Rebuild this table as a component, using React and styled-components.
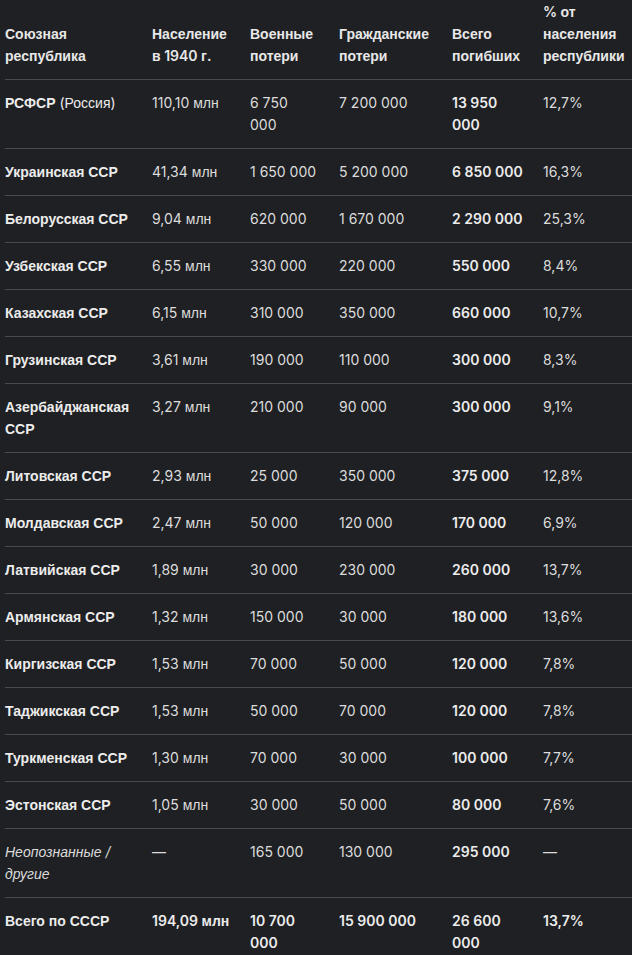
import React from "react";
import styled, { createGlobalStyle } from "styled-components";

const GlobalStyle = createGlobalStyle`
  html, body {
    margin: 0;
    padding: 0;
    background: #1f2023;
  }
  body {
    font-family: Inter, "Noto Sans", sans-serif;
    color: #e3e3e3;
    -webkit-font-smoothing: antialiased;
  }
`;

const Page = styled.div`
  padding: 0 0 0 5px;
  overflow: hidden;
`;

const Table = styled.table`
  border-collapse: collapse;
  table-layout: fixed;
  width: 627px;
  font-size: 14px;
  line-height: 22px;
`;

const Th = styled.th`
  text-align: left;
  vertical-align: bottom;
  font-weight: 600;
  white-space: pre;
  padding: 1px 0 12px 0;
  border-bottom: 1px solid #47494d;
  color: #e8e8e8;
`;

const Td = styled.td`
  vertical-align: top;
  white-space: pre;
  padding: 12px 0;
  border-bottom: 1px solid #47494d;
  font-weight: ${({ $bold }) => ($bold ? 600 : 400)};
  font-style: ${({ $italic }) => ($italic ? "italic" : "normal")};
  color: ${({ $bold }) => ($bold ? "#ececec" : "#dcdcdc")};
`;

// Cyrillic falls back to an Arial-like face in the original
const Cyr = styled.span`
  font-family: "Liberation Sans", Arial, sans-serif;
`;

const Plain = styled.span`
  font-weight: 400;
`;

function Txt({ children }) {
  const parts = children.split(/([\u0400-\u04FF]+(?:[ /]+[\u0400-\u04FF]+)*)/);
  return parts.map((p, i) =>
    /[\u0400-\u04FF]/.test(p) ? <Cyr key={i}>{p}</Cyr> : p
  );
}

const widths = [147, 98, 89, 113, 91, 89];

const headers = [
  "Союзная\nреспублика",
  "Население\nв 1940 г.",
  "Военные\nпотери",
  "Гражданские\nпотери",
  "Всего\nпогибших",
  "% от\nнаселения\nреспублики",
];

const rows = [
  { name: "РСФСР", note: " (Россия)", pop: "110,10 млн", mil: "6 750\n000", civ: "7 200 000", total: "13 950\n000", pct: "12,7%" },
  { name: "Украинская ССР", pop: "41,34 млн", mil: "1 650 000", civ: "5 200 000", total: "6 850 000", pct: "16,3%" },
  { name: "Белорусская ССР", pop: "9,04 млн", mil: "620 000", civ: "1 670 000", total: "2 290 000", pct: "25,3%" },
  { name: "Узбекская ССР", pop: "6,55 млн", mil: "330 000", civ: "220 000", total: "550 000", pct: "8,4%" },
  { name: "Казахская ССР", pop: "6,15 млн", mil: "310 000", civ: "350 000", total: "660 000", pct: "10,7%" },
  { name: "Грузинская ССР", pop: "3,61 млн", mil: "190 000", civ: "110 000", total: "300 000", pct: "8,3%" },
  { name: "Азербайджанская\nССР", pop: "3,27 млн", mil: "210 000", civ: "90 000", total: "300 000", pct: "9,1%" },
  { name: "Литовская ССР", pop: "2,93 млн", mil: "25 000", civ: "350 000", total: "375 000", pct: "12,8%" },
  { name: "Молдавская ССР", pop: "2,47 млн", mil: "50 000", civ: "120 000", total: "170 000", pct: "6,9%" },
  { name: "Латвийская ССР", pop: "1,89 млн", mil: "30 000", civ: "230 000", total: "260 000", pct: "13,7%" },
  { name: "Армянская ССР", pop: "1,32 млн", mil: "150 000", civ: "30 000", total: "180 000", pct: "13,6%" },
  { name: "Киргизская ССР", pop: "1,53 млн", mil: "70 000", civ: "50 000", total: "120 000", pct: "7,8%" },
  { name: "Таджикская ССР", pop: "1,53 млн", mil: "50 000", civ: "70 000", total: "120 000", pct: "7,8%" },
  { name: "Туркменская ССР", pop: "1,30 млн", mil: "70 000", civ: "30 000", total: "100 000", pct: "7,7%" },
  { name: "Эстонская ССР", pop: "1,05 млн", mil: "30 000", civ: "50 000", total: "80 000", pct: "7,6%" },
  { name: "Неопознанные /\nдругие", other: true, pop: "—", mil: "165 000", civ: "130 000", total: "295 000", pct: "—" },
];

const summary = ["Всего по СССР", "194,09 млн", "10 700\n000", "15 900 000", "26 600\n000", "13,7%"];

export default function App() {
  return (
    <Page>
      <GlobalStyle />
      <Table>
        <colgroup>
          {widths.map((w, i) => (
            <col key={i} style={{ width: w }} />
          ))}
        </colgroup>
        <thead>
          <tr>
            {headers.map((h) => (
              <Th key={h}>
                <Txt>{h}</Txt>
              </Th>
            ))}
          </tr>
        </thead>
        <tbody>
          {rows.map((r) => (
            <tr key={r.name}>
              <Td $bold={!r.other} $italic={r.other}>
                <Txt>{r.name}</Txt>
                {r.note && (
                  <Plain>
                    <Txt>{r.note}</Txt>
                  </Plain>
                )}
              </Td>
              <Td><Txt>{r.pop}</Txt></Td>
              <Td>{r.mil}</Td>
              <Td>{r.civ}</Td>
              <Td $bold>{r.total}</Td>
              <Td>{r.pct}</Td>
            </tr>
          ))}
          <tr>
            {summary.map((s, i) => (
              <Td key={i} $bold>
                <Txt>{s}</Txt>
              </Td>
            ))}
          </tr>
        </tbody>
      </Table>
    </Page>
  );
}
